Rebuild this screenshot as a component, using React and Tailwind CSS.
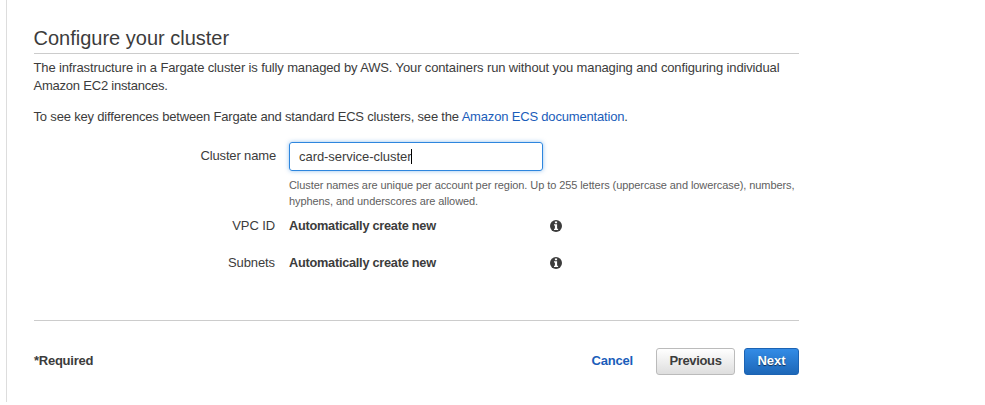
import React from "react";

function InfoIcon() {
  return (
    <svg className="block h-3 w-3" viewBox="0 0 12 12" aria-hidden="true">
      <circle cx="6" cy="6" r="6" fill="#3c3c3c" />
      <path fill="#fff" d="M4.9 1.5h2.200v1.800H4.900zM4 4.300h3.100v4.400h1V10H4V8.700h0.900V5.500H4z" />
    </svg>
  );
}

function FixedRow({ label, value }) {
  return (
    <div className="flex h-[37px] items-start leading-[18px]">
      <div className="w-[241px] shrink-0 text-right tracking-[-0.1px]">{label}</div>
      <div className="ml-[14px] w-[261px] text-[12.75px] font-bold tracking-[-0.26px]">{value}</div>
      <div className="pt-[3px]">
        <InfoIcon />
      </div>
    </div>
  );
}

export default function App() {
  return (
    <div className="h-[405px] w-[985px] overflow-hidden bg-white font-['Liberation_Sans',Arial,sans-serif] text-[13px] text-[#3c3c3c]">
      <main className="ml-[6px] h-[402px] border-l border-[#ddd] pl-[27px]">
        <div className="w-[765px]">
          <h1 className="h-[54px] border-b border-[#ccc] pt-[24px] text-[20px] leading-[28px]">
            <span className="-ml-[0.5px]">Configure your cluster</span>
          </h1>
          <p className="mt-[5px] -ml-[0.5px] whitespace-nowrap leading-[18px]">
            <span className="tracking-[-0.132px]">The infrastructure in a Fargate cluster is fully managed by AWS. Your containers run without you managing and configuring individual</span>
            <br />
            <span className="tracking-[-0.22px]">Amazon EC2 instances.</span>
          </p>
          <p className="mt-[13px] -ml-[0.5px] whitespace-nowrap leading-[18px] tracking-[-0.178px]">
            <span>To see key differences between Fargate and standard ECS clusters, see the </span>
            <a className="text-[#1a5dba]">Amazon ECS documentation</a>.
          </p>

          <div className="mt-[16px] flex items-start">
            <label className="w-[242px] shrink-0 pt-[5px] text-right leading-[18px] tracking-[-0.15px]">Cluster name</label>
            <div className="ml-[13px]">
              <div className="flex h-[29px] w-[254px] items-center rounded-[3px] border border-[#2e86de] pl-[9px] shadow-[0_0_4px_rgba(46,134,222,0.5)]">
                <span className="leading-[18px] tracking-[-0.05px]">card-service-cluster</span>
                <span className="h-[15px] w-px bg-black" />
              </div>
              <p className="mt-[6px] whitespace-nowrap text-[11px] leading-[16px] tracking-[-0.08px] text-[#606060]">
                Cluster names are unique per account per region. Up to 255 letters (uppercase and lowercase), numbers,
                <br />
                hyphens, and underscores are allowed.
              </p>
            </div>
          </div>

          <div className="mt-[8px]">
            <FixedRow label="VPC ID" value="Automatically create new" />
            <FixedRow label="Subnets" value="Automatically create new" />
          </div>

          <footer className="mt-[29px] flex items-start border-t border-[#ccc] pt-[27px] font-bold">
            <div className="pt-[4px] leading-[18px] tracking-[-0.25px]">*Required</div>
            <a className="ml-auto pt-[4px] leading-[18px] tracking-[-0.2px] text-[#1a5dba]">Cancel</a>
            <button className="ml-[23px] h-[27px] w-[79px] rounded-[3px] border border-[#bbb] bg-linear-to-b from-white to-[#dedede] pb-[1px] leading-[18px] tracking-[-0.35px]">
              Previous
            </button>
            <button className="ml-[9px] h-[27px] w-[55px] rounded-[3px] border border-[#1c63b3] bg-linear-to-b from-[#338ce6] to-[#1d67b8] pb-[1px] leading-[18px] text-white [text-shadow:0_1px_1px_rgba(0,0,0,0.6)]">
              Next
            </button>
          </footer>
        </div>
      </main>
    </div>
  );
}
